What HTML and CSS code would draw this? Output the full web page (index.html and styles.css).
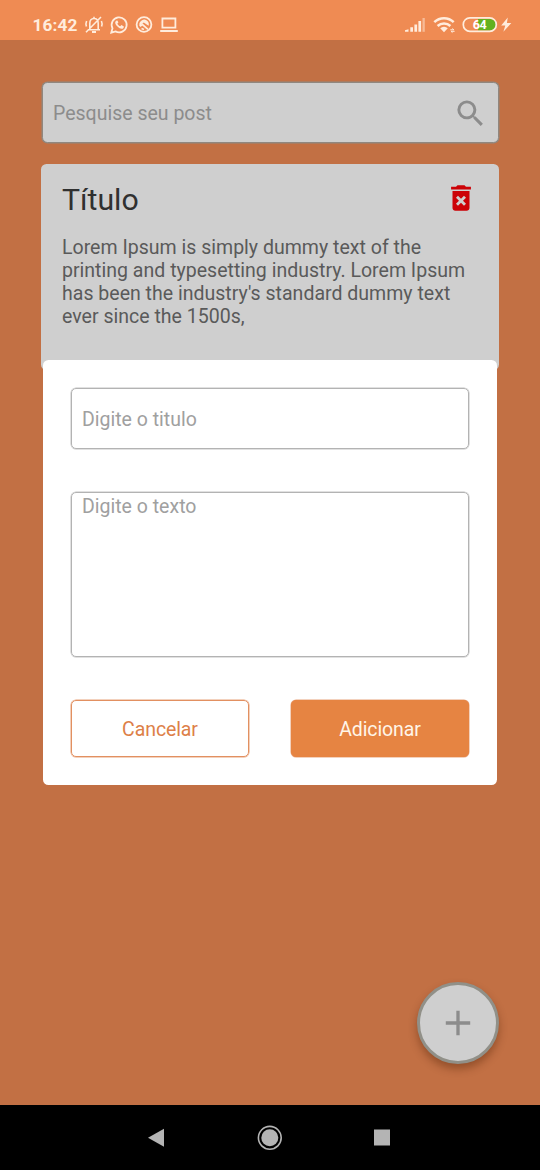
FILE: index.html
```html
<!DOCTYPE html>
<html lang="pt-BR">
<head>
<meta charset="utf-8">
<title>Posts</title>
<link rel="stylesheet" href="styles.css">
</head>
<body>
<div class="phone">
  <header class="status">
    <span class="clock">16:42</span>
    <svg class="status-left" width="96" height="20" viewBox="0 0 96 20" fill="none" stroke="#ffecdc" stroke-width="1.8">
      <path d="M4.200 14.800h11.800M5.800 14.500V8.500C5.800 5.200 7.400 3.500 10 3.500s4.200 1.700 4.200 5v6M10 1.800v2M2 17.200L17 2M2.600 6Q1.500 8.500 2.400 11.500M17.400 6q1.200 2.500.2 5.500" stroke-width="1.600"/>
      <path d="M8 17h4" stroke-width="2"/>
      <path d="M27.300 17.600l1.200-4.300a7.500 7.500 0 1 1 3 3.100z"/>
      <path d="M32.100 5.700c-1.700 1.300-1 3.500 1.400 5.900s4.700 3 6 1.300l.4-1.400-2.500-1.400-1.100 1.200c-1.300-.4-2.500-1.600-2.900-2.900l1-1-1-2z" fill="#ffecdc" stroke="none"/>
      <circle cx="60" cy="9.500" r="7.400"/>
      <path d="M55.700 11.300a4.800 4.800 0 0 1 8-5c1.200 1.300 1.400 3 .9 4.500l-4.900-3.200z" fill="#ffecdc" stroke="none"/>
      <path d="M55.800 11.200l2.700-1.700 5.500 4.900M57.500 13.500l2.500 1" stroke-width="1.700"/>
      <path d="M78.400 12.600V3.500h13v9.100zM76.200 16h17.600"/>
    </svg>
    <svg class="status-right" width="108" height="20" viewBox="0 0 108 20">
      <g fill="#ffecdc">
        <path d="M0 16.800v-1.600l3.500-1v2.600zM5.300 16.800v-4.600H8v4.600zM9.400 16.800V9.600h2.700v7.200zM13.400 16.800V6h2.700v10.800z"/>
        <path d="M17.500 16.800V3h2.300v13.800z" opacity=".5"/>
      </g>
      <g fill="none" stroke="#ffecdc" stroke-width="2.500">
        <path d="M29.300 7.200a13.900 13.900 0 0 1 19.400 0M32.600 11a9.200 9.200 0 0 1 12.800 0"/>
        <path d="M39 17.300l-3.800-4a5.300 5.300 0 0 1 7.600 0z" fill="#ffecdc" stroke="none"/>
        <path d="M45.300 14.800h3.600l-1.500-1.300M49.600 16.300H46l1.500 1.300" stroke-width="1"/>
      </g>
      <path d="M73 4h12.200a5.700 5.700 0 0 1 0 11.500H73z" fill="#63b11f"/>
      <rect x="58.300" y="2.800" width="33" height="13.500" rx="6.600" fill="none" stroke="#ffecdc" stroke-width="1.700"/>
      <text class="battery" x="74.500" y="14" text-anchor="middle">64</text>
      <path d="M102.800 2.500l-6.600 8h4.100l-1.900 6.300 7.900-8.700h-4.400z" fill="#ffecdc"/>
    </svg>
  </header>

  <main class="screen">
    <div class="search">
      <span>Pesquise seu post</span>
      <svg width="35" height="35" viewBox="0 0 24 24" fill="#8c8c8c"><path d="M15.500 14h-.79l-.28-.27A6.470 6.470 0 0 0 16 9.500 6.500 6.500 0 1 0 9.500 16c1.610 0 3.090-.59 4.230-1.570l.27.280v.79l5 4.990L20.490 19zm-6 0A4.500 4.500 0 1 1 14 9.500 4.490 4.490 0 0 1 9.500 14z"/></svg>
    </div>
    <article class="post">
      <div class="post-head">
        <h1>Título</h1>
        <svg width="34" height="34" viewBox="0 0 24 24" fill="#cc0207"><path d="M6 19c0 1.100.9 2 2 2h8c1.100 0 2-.9 2-2V7H6zm2.460-7.120l1.410-1.410L12 12.590l2.120-2.120 1.410 1.410L13.410 14l2.120 2.120-1.410 1.410L12 15.410l-2.120 2.120-1.410-1.410L10.590 14zM15.500 4l-1-1h-5l-1 1H5v2h14V4z"/></svg>
      </div>
      <p>Lorem Ipsum is simply dummy text of the printing and typesetting industry. Lorem Ipsum has been the industry's standard dummy text ever since the 1500s,</p>
    </article>
    <div class="fab">
      <svg width="26" height="26" viewBox="0 0 26 26" stroke="#8c8c8c" stroke-width="3.300"><path d="M13 .8v24.400M.8 13h24.400"/></svg>
    </div>
    <section class="modal">
      <div class="field">Digite o titulo</div>
      <div class="field area">Digite o texto</div>
      <div class="actions">
        <div class="btn">Cancelar</div>
        <div class="btn primary">Adicionar</div>
      </div>
    </section>
  </main>

  <nav class="nav">
    <svg width="26" height="26" viewBox="0 0 26 26" fill="#b4b4b4"><path d="M4 12.800L20 3.800v18z"/></svg>
    <svg width="26" height="26" viewBox="0 0 26 26" fill="#b4b4b4"><circle cx="12.800" cy="12.800" r="8.500"/><circle cx="12.800" cy="12.800" r="11.400" fill="none" stroke="#b4b4b4" stroke-width="1.600"/></svg>
    <svg width="26" height="26" viewBox="0 0 26 26" fill="#b4b4b4"><path d="M5 4.500h16v16H5z"/></svg>
  </nav>
</div>
</body>
</html>
```
FILE: styles.css
```css
* { box-sizing: border-box; }
body { margin: 0; font-family: Roboto, sans-serif; font-size: 19.500px; }
svg { display: block; flex: none; }
.phone { width: 540px; height: 1170px; display: flex; flex-direction: column; overflow: hidden; }
.status { height: 40px; flex: none; background: #ef8b53; display: flex; align-items: flex-start; padding: 15px 28px 0 32.500px; color: #ffecdc; }
.clock { font-size: 17.300px; font-weight: 700; line-height: 20px; width: 51.500px; letter-spacing: .1px; }
.status-right { margin-left: auto; margin-right: -1px; }
.battery { font: 700 12.500px Roboto, sans-serif; letter-spacing: -.5px; fill: #fff; }
.screen { flex: 1; position: relative; background: #c27044; padding: 42px 41px 0; }
.search { height: 61px; margin: 0 0 21px 1px; border: 1px solid #90877f; border-radius: 5.500px; box-shadow: 0 0 0 .5px #90877f; background: #cfcfcf; color: #8c8c8c; display: flex; align-items: center; justify-content: space-between; padding: 1px 10px 0 10px; }
.post { height: 206px; background: #cfcfcf; border-radius: 5.500px; padding: 17px 21px 0 21px; }
.post-head { height: 37px; display: flex; justify-content: space-between; align-items: center; }
.post-head h1 { margin: 0; font-size: 30.250px; font-weight: 400; color: #303030; }
.post-head svg { margin-bottom: 3px; }
.post p { margin: 18px -1px 0 0; color: #5a5a5a; font-size: 19.550px; line-height: 23px; }
.modal { position: absolute; left: 43px; top: 320px; width: 454px; height: 425px; background: #fff; border-radius: 5.500px; padding: 28px 28px 27px 28px; display: flex; flex-direction: column; }
.field { height: 61px; margin: 0 0 43px; border: 1px solid #b3b3b3; border-radius: 5px; box-shadow: 0 0 0 .5px #c4c4c4; color: #a0a0a0; padding: 19px 10px 0; line-height: 23px; flex: none; }
.area { height: 165px; padding-top: 2px; }
.actions { display: flex; justify-content: space-between; }
.btn { width: 178px; height: 57px; border: 1px solid #e29061; border-radius: 5px; box-shadow: 0 0 0 .5px #e8a47d; color: #dd8048; display: flex; align-items: center; justify-content: center; padding-top: 2px; font-size: 19.500px; letter-spacing: -.1px; }
.primary { background: #e68442; border-color: #e68442; color: #fff5e8; }
.fab { position: absolute; left: 417px; top: 942px; width: 82px; height: 82px; border-radius: 50%; border: 3px solid #919088; background: #cfcfcf; box-shadow: 0 5px 8px rgba(70,25,0,.38); display: flex; align-items: center; justify-content: center; }
.nav { height: 65px; flex: none; background: #000; display: flex; justify-content: space-between; align-items: center; padding: 0 145px 0 144px; }
```
